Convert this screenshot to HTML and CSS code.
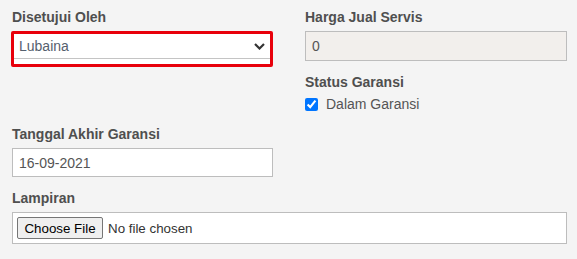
FILE: index.html
```html
<!DOCTYPE html>
<html lang="id">
<head>
<meta charset="utf-8">
<title>Form Servis</title>
<link rel="stylesheet" href="styles.css">
</head>
<body>
<form class="form">
  <div class="field">
    <div class="label">Disetujui Oleh</div>
    <div class="select-wrap">
      <div class="select">
        <span class="select-text">Lubaina</span>
        <svg class="chevron" width="11" height="7" viewBox="0 0 11 7"><polyline points="1,1 5.5,5.5 10,1" fill="none" stroke="#333" stroke-width="2.2"/></svg>
      </div>
    </div>
  </div>
  <div class="field">
    <div class="label">Harga Jual Servis</div>
    <div class="input input-readonly">0</div>
    <div class="label label-status">Status Garansi</div>
    <label class="check-row"><input type="checkbox" class="check" checked><span>Dalam Garansi</span></label>
  </div>
  <div class="field field-row2">
    <div class="label">Tanggal Akhir Garansi</div>
    <div class="input input-date">16-09-2021</div>
  </div>
  <div class="field field-full">
    <div class="label">Lampiran</div>
    <div class="file-box">
      <button type="button" class="file-btn">Choose File</button>
      <span class="file-name">No file chosen</span>
    </div>
  </div>
</form>
</body>
</html>
```
FILE: styles.css
```css
html, body {
  margin: 0;
  padding: 0;
  background: #f4f4f4;
}
body {
  font-family: "Liberation Sans", Arial, sans-serif;
  font-size: 14px;
  color: #555;
}
.form {
  display: grid;
  grid-template-columns: 261px 262px;
  column-gap: 32px;
  padding: 9px 10px 0 12px;
  align-items: start;
}
.field {
  display: flex;
  flex-direction: column;
}
.field-row2 {
  margin-top: 12px;
}
.field-full {
  grid-column: 1 / span 2;
  margin-top: 13px;
}
.label {
  font-weight: bold;
  font-size: 14px;
  line-height: 16px;
  color: #4f4f4f;
  margin-bottom: 6px;
}
.label-status {
  margin-top: 13px;
  margin-bottom: 0;
}
.select-wrap {
  margin-left: -1px;
  width: 256px;
  border: 3px solid #e8000b;
  border-radius: 2px;
  background: #fff;
  padding-bottom: 5px;
}
.select {
  height: 24px;
  border-bottom: 1px solid #c4c4c4;
  display: flex;
  align-items: center;
  justify-content: space-between;
  padding: 0 5px 0 5px;
}
.select-text {
  color: #55606e;
  line-height: 16px;
}
.chevron {
  display: block;
}
.input {
  box-sizing: border-box;
  height: 30px;
  border: 1px solid #bdbdbd;
  background: #fff;
  padding: 0 6px;
  display: flex;
  align-items: center;
  color: #555;
}
.input-readonly {
  background: #f2efec;
}
.input-date {
  height: 29px;
}
.check-row {
  display: flex;
  align-items: center;
  height: 20px;
  margin-top: 4px;
  gap: 8px;
  color: #555;
}
.check {
  margin: 0;
  width: 13px;
  height: 13px;
}
.file-box {
  box-sizing: border-box;
  height: 32px;
  border: 1px solid #bdbdbd;
  background: #fff;
  display: flex;
  align-items: center;
  padding: 0 4px;
  gap: 5px;
}
.file-btn {
  box-sizing: border-box;
  width: 86px;
  height: 22px;
  margin: 0;
  padding: 0;
  border: 1px solid #767676;
  border-radius: 2px;
  background: #efefef;
  font-family: "Liberation Sans", Arial, sans-serif;
  font-size: 13.333px;
  color: #000;
}
.file-name {
  font-size: 13.333px;
  color: #333;
}
```
